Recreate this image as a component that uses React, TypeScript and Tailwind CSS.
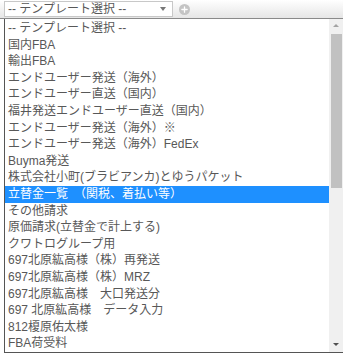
import { Plus } from "lucide-react";

const options = [
  "-- テンプレート選択 --",
  "国内FBA",
  "輸出FBA",
  "エンドユーザー発送（海外）",
  "エンドユーザー直送（国内）",
  "福井発送エンドユーザー直送（国内）",
  "エンドユーザー発送（海外）※",
  "エンドユーザー発送（海外）FedEx",
  "Buyma発送",
  "株式会社小町(ブラビアンカ)とゆうパケット",
  "立替金一覧　（関税、着払い等）",
  "その他請求",
  "原価請求(立替金で計上する)",
  "クワトログループ用",
  "697北原紘高様（株）再発送",
  "697北原紘高様（株）MRZ",
  "697北原紘高様　大口発送分",
  "697 北原紘高様　データ入力",
  "812榎原佑太様",
  "FBA荷受料",
];

const selected = 10;

export default function App() {
  return (
    <div className="w-[343px] h-[353px] bg-white overflow-hidden text-[12px] text-[#585858] font-['Liberation_Sans','Noto_Sans_CJK_JP',sans-serif]">
      {/* toolbar with the template select */}
      <div className="h-[19px] flex items-center bg-gradient-to-b from-white to-[#e6e6e6] border-b border-[#8a8a8a]">
        <div className="ml-[4px] w-[169px] h-[16px] bg-white border border-[#c8c8c8] flex items-center pl-[3px] pr-[6px]">
          <span className="flex-1 whitespace-nowrap">-- テンプレート選択 --</span>
          <span className="w-0 h-0 border-l-[3px] border-r-[3px] border-t-[4px] border-l-transparent border-r-transparent border-t-[#777]" />
        </div>
        <div className="ml-[6px] w-[11px] h-[11px] rounded-full bg-[#c4c4c4] flex items-center justify-center">
          <Plus size={9} strokeWidth={3.5} className="text-white" />
        </div>
      </div>

      {/* open dropdown list */}
      <div className="ml-[4px] h-[334px] flex border-l border-b border-[#555]">
        <ul className="flex-1 pt-[1px]">
          {options.map((o, i) => (
            <li
              key={o}
              className={
                i === selected
                  ? "h-[16.6px] leading-[16.6px] pl-[3px] whitespace-nowrap overflow-hidden bg-[#1e90ff] text-white"
                  : "h-[16.6px] leading-[16.6px] pl-[3px] whitespace-nowrap overflow-hidden"
              }
            >
              {o}
            </li>
          ))}
        </ul>
        <div className="w-[14px] bg-[#f0f0f0] flex flex-col items-center">
          <span className="mt-[5px] w-0 h-0 border-l-[3px] border-r-[3px] border-b-[3px] border-l-transparent border-r-transparent border-b-[#a3a3a3]" />
          <div className="mt-[7px] w-[11px] h-[154px] bg-[#c1c1c1]" />
          <div className="flex-1" />
          <span className="mb-[6px] w-0 h-0 border-l-[3px] border-r-[3px] border-t-[3px] border-l-transparent border-r-transparent border-t-[#505050]" />
        </div>
      </div>
    </div>
  );
}
